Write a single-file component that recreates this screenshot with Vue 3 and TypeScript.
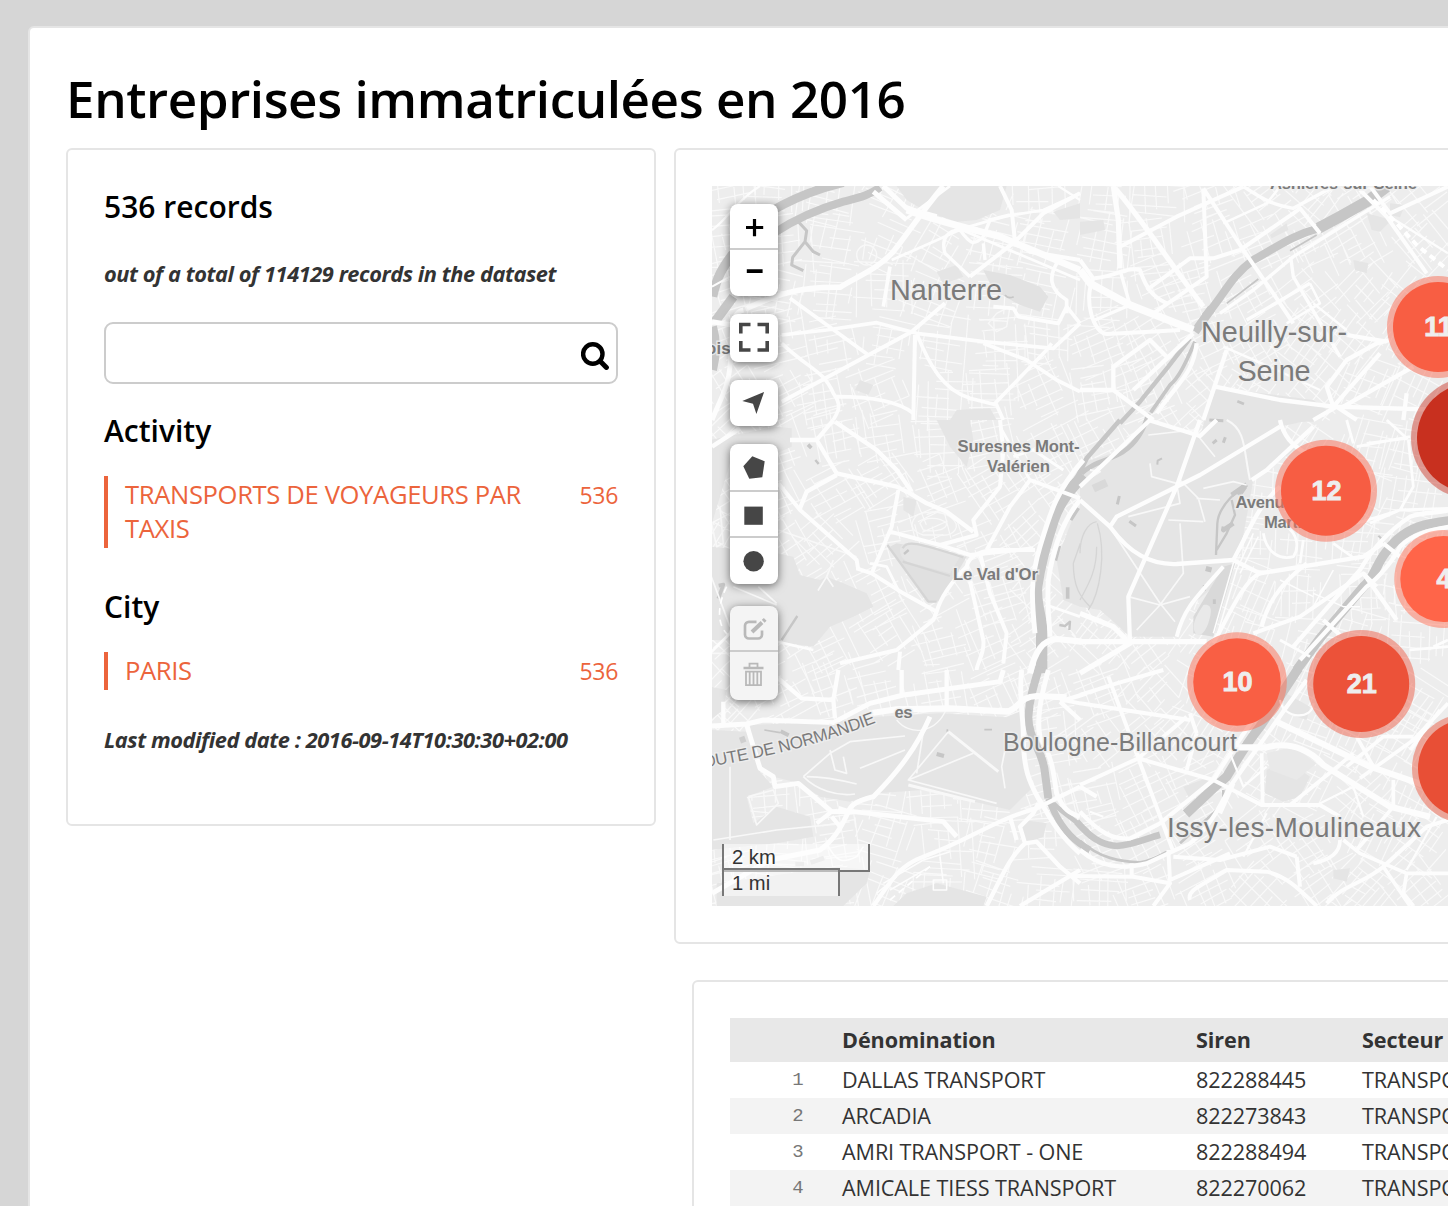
<script setup lang="ts">
interface Shape { t: string; d: string; w?: number; c?: string }
interface Label { x: number; y: number; w: number; s: number; text: string; bold?: boolean }

const records = [
  { n: 1, name: 'DALLAS TRANSPORT', siren: '822288445' },
  { n: 2, name: 'ARCADIA', siren: '822273843' },
  { n: 3, name: 'AMRI TRANSPORT - ONE', siren: '822288494' },
  { n: 4, name: 'AMICALE TIESS TRANSPORT', siren: '822270062' },
]

const facets = [
  { title: 'Activity', value: 'TRANSPORTS DE VOYAGEURS PAR TAXIS', count: 536 },
  { title: 'City', value: 'PARIS', count: 536 },
]

// The map plane is drawn in tiles; each tile has its own origin, in thirds of a pixel.
const tiles: Record<string, string> = {
  A: 'translate(0 0)', B: 'translate(1110 0)',
  C: 'translate(0 720)', D: 'translate(1110 720)',
  E: 'translate(0 1470)', F: 'translate(1110 1470)',
}

// Side streets: small grids of jittered lines whose direction drifts over the plane.
function sideStreets(): string {
  let seed = 20160914
  const rnd = () => {
    seed = (seed * 1664525 + 1013904223) % 4294967296
    return seed / 4294967296
  }
  const out: string[] = []
  for (let cy = 40; cy < 2240; cy += 150) {
    for (let cx = 40; cx < 2280; cx += 160) {
      const x0 = cx + (rnd() - 0.5) * 50
      const y0 = cy + (rnd() - 0.5) * 50
      const a = -0.55 + Math.sin(cx / 420) * 0.5 + Math.cos(cy / 380) * 0.4 + (rnd() - 0.5) * 0.5
      for (let k = 0; k < 2; k++) {
        const t = a + k * (Math.PI / 2) + (rnd() - 0.5) * 0.15
        const ux = Math.cos(t), uy = Math.sin(t)
        const gap = k ? 36 : 26
        for (let o = -85; o < 85; o += gap * (0.7 + rnd() * 0.7)) {
          const s = -95 + rnd() * 80, e = 95 - rnd() * 80
          const b = (rnd() - 0.5) * 12
          const px = x0 - uy * o, py = y0 + ux * o
          out.push(`M${(px + ux * s).toFixed(0)} ${(py + uy * s).toFixed(0)}L${(px + ux * e - uy * b).toFixed(0)} ${(py + uy * e + ux * b).toFixed(0)}`)
        }
      }
    }
  }
  return out.join('')
}
const streets = sideStreets()

const parks: Shape[] = [
  { t: 'A', d: 'M560 18H890L870 90 800 120 740 125 650 95 590 60Z' },
  { t: 'A', d: 'M820 270L900 285 990 320 1015 350 990 395 930 375 850 330Z', c: '#e2e2e2' },
  { t: 'A', d: 'M680 275L740 255 760 290 700 312Z' },
  { t: 'A', d: 'M450 600L490 615 475 645 435 630Z' },
  { t: 'A', d: 'M1030 95L1110 70 1110 115 1050 120Z' },
  { t: 'A', d: 'M740 690L840 685 860 720H720Z' },
  { t: 'B', d: 'M0 125L70 120 75 150 0 165Z' },
  { t: 'B', d: 'M860 100L935 120 900 155 875 150Z' },
  { t: 'B', d: 'M930 70L975 75 960 112 930 105Z' },
  { t: 'B', d: 'M820 240L865 250 860 280 825 270Z' },
  { t: 'B', d: 'M570 165L620 130 625 150 575 175Z' },
  { t: 'B', d: 'M410 622L700 660 740 690 700 725H370Z' },
  { t: 'D', d: 'M205 0L360 48 375 0H690L600 20 650 85 520 180 480 400 400 500 330 560 290 650 150 650 95 600 60 570 0 560V130L130 90Z' },
  { t: 'D', d: 'M430 440L465 430 400 650 340 640 340 590Z', c: '#d9d9d9' },
  { t: 'D', d: 'M370 555C400 550 395 580 385 610C370 650 350 655 342 630C338 600 355 580 370 555Z', c: '#e9e9e9' },
  { t: 'C', d: 'M0 60L200 20 245 25 245 80 200 100 60 130 0 330Z' },
  { t: 'C', d: 'M680 0H780L790 60 770 140 720 80Z' },
  { t: 'C', d: 'M200 400L250 410 270 465 330 480 350 470 400 490 470 520 490 560 430 590 360 620 310 680 200 665 0 660V380Z' },
  { t: 'C', d: 'M580 230L620 240 610 290 580 270Z' },
  { t: 'C', d: 'M560 370L770 410 690 545 650 545 540 380Z', c: '#e0e0e0' },
  { t: 'C', d: 'M575 375C600 360 640 370 750 410L720 460 590 425C570 410 565 390 575 375Z' },
  { t: 'C', d: 'M1090 290L1110 260V560L1060 540 1040 420Z' },
  { t: 'E', d: 'M120 165L360 155 500 140 690 130 890 142 940 120 945 280 970 350 900 420 640 360 500 370 420 395 330 380 270 340 190 320 140 300Z' },
  { t: 'E', d: 'M0 180L110 185 150 305 190 350 110 380 130 460 200 410 300 440 310 500 200 520 0 540Z' },
  { t: 'E', d: 'M380 590L480 600 470 640 400 708H20V640Z' },
  { t: 'E', d: 'M590 670L680 640 830 680 820 708H550Z' },
  { t: 'E', d: 'M940 450L1010 460 1000 500 950 520 930 480Z' },
  { t: 'E', d: 'M0 50L50 60 40 120 0 150Z' },
  { t: 'F', d: 'M560 300L620 270 690 320 660 380 610 395 555 370Z' },
  { t: 'F', d: 'M560 250L640 230 710 280 650 330 570 300Z', c: '#e9e9e9' },
  { t: 'F', d: 'M760 600L810 595 800 635 760 625Z' },
  { t: 'F', d: 'M310 350L390 320 400 340 330 390Z' },
  { t: 'F', d: 'M600 60L690 110 680 150 620 130Z' },
]

const water: Shape[] = [
  { t: 'A', w: 26, d: 'M190 90C250 55 290 40 340 24L400 8' },
  { t: 'A', w: 24, d: 'M190 160C260 115 330 85 400 65C450 52 480 45 510 22' },
  { t: 'A', w: 28, d: 'M200 150L66 225C40 260 20 290 8 350M70 350L15 425' },
  { t: 'A', w: 26, d: 'M8 440C20 480 20 520 8 570' },
  { t: 'A', w: 9, d: 'M265 125L290 152 285 185 310 215 330 225M285 185L248 232 245 255 280 272' },
  { t: 'A', w: 5, d: 'M885 345Q895 358 911 350' },
  { t: 'B', w: 34, d: 'M920 20L860 65 780 110 715 145' },
  { t: 'B', w: 24, d: 'M715 145C640 165 600 195 520 240C450 290 430 350 375 410' },
  { t: 'B', w: 26, d: 'M395 385L345 455' },
  { t: 'B', w: 13, d: 'M330 475L265 560 180 665 120 730' },
  { t: 'B', w: 11, d: 'M345 485C320 540 300 590 270 615L212 698' },
  { t: 'B', w: 5, d: 'M710 165L630 212M535 297L440 370' },
  { t: 'D', w: 14, d: 'M120 0L20 115 -10 175M205 -20C190 40 160 75 130 95C80 125 40 125 5 160' },
  { t: 'C', w: 34, d: 'M1120 165C1080 210 1050 240 1030 300C1010 360 990 430 980 500C975 560 1000 600 995 650V760' },
  { t: 'E', w: 24, d: 'M988 -10C970 50 958 90 955 140C955 210 1000 240 1005 310L1015 385' },
  { t: 'E', w: 20, d: 'M1015 385L1035 430C1060 480 1090 515 1140 540' },
  { t: 'E', w: 14, d: 'M1030 400C1070 440 1100 450 1130 485' },
  { t: 'F', w: 20, d: 'M-10 455C30 500 60 525 110 528C160 525 200 505 240 494' },
  { t: 'F', w: 8, d: 'M0 512C60 565 120 575 180 577C220 570 240 555 262 545M300 520L400 430 430 400V360' },
  { t: 'F', w: 28, d: 'M318 432L400 355 440 320C470 270 500 220 540 170L655 -5' },
  { t: 'D', w: 28, d: 'M650 750L720 655 850 500C890 470 885 420 950 360C990 325 1030 310 1110 302' },
  { t: 'D', w: 14, d: 'M500 193L455 225M460 310L430 330 432 320' },
  { t: 'D', w: 7, d: 'M490 200C450 230 415 270 412 310L408 405M455 240L465 285 440 340 410 390' },
  { t: 'D', w: 18, d: 'M494 198L475 225M388 440L384 455' },
  { t: 'D', w: 9, d: 'M398 70L410 60M436 52L430 68M118 228L112 253M148 304L168 318M373 495V512M403 538V552M388 0L430 2' },
  { t: 'D', w: 6, d: 'M246 115L233 122 232 134' },
  { t: 'D', w: 6, d: 'M895 347L909 360' },
  { t: 'B', w: 8, d: 'M472 664L492 672' },
  { t: 'C', w: 11, d: 'M1105 264L1082 300M1073 502V536M26 497L40 494 25 536M294 74L304 84' },
  { t: 'C', w: 7, d: 'M1050 378L1038 422M316 120L326 132M1048 615L1065 618 1080 605 1078 630M262 588L215 660M582 402L596 390' },
  { t: 'C', w: 7, c: '#d5d5d5', d: 'M532 375L655 545 680 545M578 385C590 360 620 368 760 412M578 425L720 468' },
  { t: 'E', w: 12, d: 'M212 184L236 196M680 252L702 258' },
  { t: 'E', w: 18, c: '#cfcfcf', d: 'M90 212L106 206' },
  { t: 'E', w: 5, d: 'M163 180L210 188M712 178V188M823 179H846' },
  { t: 'E', w: 14, c: '#dadada', d: 'M256 582H282M302 578L342 564' },
  { t: 'D', w: 24, c: '#d9d9d9', d: 'M40 206L80 188' },
  { t: 'D', w: 4, c: '#d5d5d5', d: 'M50 305C20 310 0 350 0 400M52 310C80 400 60 520 25 570M50 380C50 460 20 500 0 540M1 370L-20 430C-20 500 0 530 30 560' },
]

const paths: Shape[] = [
  { t: 'D', w: 5, d: 'M145 290L300 250 290 190 215 170 210 130M205 45L340 30 405 110M300 180L355 235 375 305M265 300L370 305M370 205L460 185 500 195M95 330L240 550 285 605M145 530L240 555 330 530M240 555L170 630M240 555L310 460 300 310M350 235L420 240' },
  { t: 'D', w: 6, d: 'M440 0C500 30 490 90 510 180M30 150L60 155 20 180' },
  { t: 'E', w: 5, d: 'M60 290V510M10 510L200 480 400 460M280 320L360 250 420 215 585 198M450 295L585 240M280 320C320 360 380 380 435 372M290 320Q350 320 440 342M715 185L595 330 860 400M595 330L790 250M640 185L620 310M885 240L875 290 885 355M115 380L190 360 205 400 140 465 115 380M360 240L375 300 410 310 400 260' },
  { t: 'E', w: 9, d: 'M715 185L865 305M595 345L795 395' },
  { t: 'E', w: 4, d: 'M560 150C600 200 680 190 710 115' },
  { t: 'C', w: 5, d: 'M0 290L20 380 40 370 30 260M70 500L200 555M145 500L200 550M0 700H200M370 420L350 470 325 510 350 470 370 500M205 330L440 410M0 460L60 620' },
  { t: 'C', w: 4, d: 'M610 300C620 270 690 270 720 290C760 320 730 350 690 345L640 345C610 335 600 320 610 300ZM630 310C640 290 690 290 710 310C710 335 660 335 640 330Z' },
  { t: 'A', w: 4, d: 'M440 225A30 30 0 1 0 500 225A30 30 0 1 0 440 225M860 400L900 380 890 440 860 455 835 430 860 400' },
]

const roads: Shape[] = [
  // north-west
  { t: 'A', w: 18, d: 'M110 385C200 345 260 320 390 322C440 290 500 270 550 215C600 150 640 90 700 18' },
  { t: 'A', w: 16, d: 'M6 425L100 440M100 390C60 400 70 440 60 560C55 620 30 660 6 720M490 35L590 120M520 18L590 85 680 110' },
  { t: 'A', w: 22, d: 'M590 90C700 130 800 150 870 170L1110 270' },
  { t: 'A', w: 9, d: 'M580 75L1110 300M590 115L720 18' },
  { t: 'A', w: 9, d: 'M545 240L660 190 760 145 880 110 1000 90 1110 40' },
  { t: 'A', w: 12, d: 'M540 260L520 380M240 355L475 525M215 465L350 450 500 428 620 460 820 485 1030 505 1110 430M620 460C660 560 700 630 780 655L860 675 880 720' },
  { t: 'A', w: 13, d: 'M705 370L605 455 215 665M615 465L610 720M870 18L905 90 915 185 960 215 1110 240M915 185L780 290M1110 40L1000 100 915 185' },
  { t: 'A', w: 11, d: 'M780 290L705 220C690 170 720 150 750 150C780 190 790 200 820 170L840 120 900 105M820 190L825 240' },
  { t: 'A', w: 12, d: 'M215 490C300 570 340 570 370 640C400 680 380 700 370 720M380 650C460 650 560 660 610 700M850 675L1010 510 1025 490M850 380L910 385 925 410 1045 430 1070 380 1110 430' },
  { t: 'A', w: 12, d: 'M1050 235C1010 290 1020 330 1070 360V400M820 490L950 540 1040 600 1110 635' },
  { t: 'A', w: 7, d: 'M6 150C50 120 80 60 150 18M6 320L60 290M1045 18L1110 60' },
  // north-east
  { t: 'B', w: 17, d: 'M100 18L115 120 120 265M105 25C180 110 270 250 370 380' },
  { t: 'B', w: 24, d: 'M0 270L30 310 150 375 340 450' },
  { t: 'B', w: 13, d: 'M0 240L40 295C10 360 40 460 80 462L210 455 300 450M45 295C120 285 140 260 180 270C200 330 220 350 260 370M120 200L290 110 490 20M370 25L380 290 220 400M370 25L490 210 600 370 640 430' },
  { t: 'B', w: 13, d: 'M200 330L330 235 400 235 480 210 640 100 660 85 720 160M840 30L920 110 1040 280M870 18L930 100 1104 20' },
  { t: 'B', w: 11, d: 'M490 20C540 50 560 70 640 85L760 20M632 230L640 290 780 530M640 230L520 330 420 400M640 230L800 130 930 50M500 420L690 310M45 420L150 375 120 270' },
  { t: 'B', w: 14, d: 'M160 630L340 460M0 630H100L220 720M100 630V560L210 480 260 530M350 490C340 580 300 600 230 700' },
  { t: 'B', w: 14, d: 'M440 510L370 720M405 620L600 660 760 680M760 680L740 620 800 540 890 490 930 480M760 680L900 520M800 465L920 485M760 680L1104 690M790 680L1000 560M700 720L770 680 830 720M980 640L970 720' },
  { t: 'B', w: 8, d: 'M430 500L590 570 720 630M700 370L800 450M600 20L560 70 430 130M930 110L1104 220M690 310L720 370 620 430' },
  // west
  { t: 'C', w: 14, d: 'M6 80L90 25M240 60H320L370 0M320 60L380 160 560 200 600 220 650 250 710 275 790 335M375 5L500 90 560 150 605 215M380 165L290 215 270 265' },
  { t: 'C', w: 13, d: 'M205 190L270 270 440 420 445 450M565 210L545 320 485 460M540 335L690 375 780 405 970 385' },
  { t: 'C', w: 13, d: 'M440 445L485 460 580 520 680 575 670 600 560 690 390 730M570 695L565 750M680 575C690 540 710 500 770 440C775 415 800 395 850 390H975' },
  { t: 'C', w: 13, d: 'M690 375L800 345 790 300 870 200 880 90 870 0M810 400L840 520 890 640 880 730M770 440L820 660C825 700 800 730 800 750M830 390L900 260 960 180 1110 235' },
  { t: 'C', w: 16, d: 'M1110 240C1060 300 1030 380 1015 480C1010 560 1020 620 1020 650M1120 120C1040 210 1020 280 990 380C960 480 965 540 975 640' },
  { t: 'C', w: 20, d: 'M960 760C975 690 1000 660 1040 657L1115 665' },
  { t: 'C', w: 9, d: 'M960 180L870 20M1010 555L1110 590M200 665L310 690M480 430L530 440 565 510M0 700L60 640 90 560M1060 150L970 90 910 110' },
  // east
  { t: 'D', w: 17, d: 'M-5 665H380M0 580L100 620 150 670 0 760' },
  { t: 'D', w: 14, d: 'M360 0L290 200 145 530 150 670M0 240L90 320C150 400 210 435 290 432L460 420M90 320L110 290 360 165 600 20M0 200L210 0' },
  { t: 'D', w: 14, d: 'M205 0L360 48 410 0M600 0C610 50 640 80 680 100M700 20L560 150 515 180M460 420C510 330 530 260 600 200M460 420L540 460 850 410 910 370' },
  { t: 'D', w: 13, d: 'M290 650C310 570 340 540 430 440M540 460C490 480 440 600 400 670M545 620C560 560 590 500 680 430M520 640L660 590 850 460 890 500' },
  { t: 'D', w: 14, d: 'M660 720L860 500C900 470 940 420 960 380C1000 340 1050 330 1110 320M640 680L840 450C880 380 930 330 990 290C1030 275 1080 280 1110 270M910 370L960 410M850 460L950 600M730 600L780 645' },
  { t: 'D', w: 9, d: 'M550 340C560 400 600 420 640 410C660 380 650 340 620 320M830 80L990 50M860 70L980 55 920 0M985 60L1000 200 960 270 830 310M800 0L820 70M760 370L830 420M670 360L660 430M870 310L960 270 1104 265M1060 680L1104 660M990 690L1104 680M600 660L690 710' },
  { t: 'D', w: 5, d: 'M500 330L460 430 400 640M520 340L470 450 410 650M535 350L480 460M700 520L790 560 840 560M600 480L700 530M760 450L700 560' },
  // south-west
  { t: 'E', w: 16, d: 'M6 168L110 162 160 150 370 158 480 100 580 75 870 35 880 0M110 165L150 295 190 320 195 350 265 340 365 425 430 425 700 455 740 500' },
  { t: 'E', w: 20, d: 'M480 130L560 118 720 115 895 125C930 110 930 80 980 78L1070 82' },
  { t: 'E', w: 16, d: 'M660 140C620 230 570 300 490 380C430 395 420 410 415 425C390 480 370 510 330 540L180 570 6 670M415 425L385 415' },
  { t: 'E', w: 14, d: 'M490 708C540 640 560 590 640 560C780 510 850 450 980 415L1110 350M710 0V115M575 0V75M205 25L275 85 370 90 375 145M370 90L385 0M40 95V160' },
  { t: 'E', w: 16, d: 'M935 0C925 90 940 130 940 200C940 300 960 340 985 385C1010 420 1030 480 1110 550M1015 0C990 90 980 150 990 200C1030 270 1030 310 1040 370C1060 420 1080 430 1110 440' },
  { t: 'E', w: 14, d: 'M985 400L970 430 930 470 945 520C900 560 880 610 830 708M945 520L980 515 1050 590 1110 640M900 440L920 510M1050 95L1110 150M1050 95L1130 70M365 425L320 460M365 440L390 470M930 708L1110 600' },
  { t: 'E', w: 5, d: 'M520 640L640 570 720 545M540 660L660 590M500 670L560 620M350 520C380 580 400 580 440 560L460 530M690 560L700 640M670 630H710V660H670Z' },
  // south-east
  { t: 'F', w: 13, d: 'M0 75L110 40 250 0M-50 90L0 100 330 150M85 20L175 265 0 345M175 265L400 330 545 405H720L780 440M330 130L350 190M175 265L280 545M175 265L320 140M320 300L350 190' },
  { t: 'F', w: 20, d: 'M470 232H560C640 210 700 250 730 285L930 410 1050 440M590 155L870 290 1104 370' },
  { t: 'F', w: 14, d: 'M0 350L50 380M0 425C60 490 100 510 150 505L240 460 400 330C450 250 500 180 570 70M0 540C60 590 120 600 200 580L330 520C380 480 410 430 450 350L620 110 680 30M460 340L420 430' },
  { t: 'F', w: 13, d: 'M-30 618L160 620 270 640 220 708M155 580V620M265 540L270 630 450 550M280 560L420 570 570 530 650 560M330 690C320 660 360 650 440 600L560 605C620 620 650 650 710 708M650 560L660 650M740 700C780 650 850 640 910 590L1040 470 1104 450' },
  { t: 'F', w: 12, d: 'M545 250L548 405M630 405L760 300 820 250M790 510L840 550 910 580 980 610H1104M780 510C780 550 750 570 700 580M980 610L970 670 1000 708M910 590L990 708M940 330V410L830 540M840 325L1000 210 1104 100M830 200L880 290M800 290L910 200H1000M990 240L1080 120' },
  { t: 'F', w: 7, d: 'M600 90C610 150 700 150 700 100M820 350L850 440M820 350L700 410M450 250L490 350 560 290M560 430L490 560M30 425L70 440M1070 440L980 600' },
]

const dashed: Shape[] = [
  { t: 'B', w: 12, d: 'M880 60L950 130 1010 195 1104 270' },
  { t: 'C', w: 5, d: 'M50 500C20 560 20 620 60 650' },
  { t: 'E', w: 5, d: 'M540 690L660 590' },
]

const labels: Label[] = [
  { x: 890, y: 300, w: 112, s: 28.8, text: 'Nanterre' },
  { x: 1201, y: 342, w: 146, s: 28.8, text: 'Neuilly-sur-' },
  { x: 1237.5, y: 381, w: 73, s: 28.8, text: 'Seine' },
  { x: 957.5, y: 451.5, w: 122, s: 16.8, text: 'Suresnes Mont-', bold: true },
  { x: 987, y: 471.5, w: 63, s: 16.8, text: 'Valérien', bold: true },
  { x: 953, y: 580, w: 85, s: 16.8, text: "Le Val d'Or", bold: true },
  { x: 1235.5, y: 508, w: 104, s: 16.8, text: 'Avenue Henri', bold: true },
  { x: 1264, y: 528, w: 48, s: 16.8, text: 'Martin', bold: true },
  { x: 894.5, y: 717.5, w: 18, s: 16.8, text: 'es', bold: true },
  { x: 706, y: 353.5, w: 24.5, s: 16.8, text: 'ois', bold: true },
  { x: 1270, y: 188.7, w: 147, s: 16.8, text: 'Asnières-sur-Seine', bold: true },
  { x: 1003, y: 751, w: 234, s: 25, text: 'Boulogne-Billancourt' },
  { x: 1167, y: 837, w: 254, s: 28, text: 'Issy-les-Moulineaux' },
]

const clusters = [
  { x: 1438, y: 327, r: 51, fill: '#f85e43', n: '11' },
  { x: 1472, y: 438, r: 61, fill: '#c8301f', n: '76' },
  { x: 1326, y: 490.7, r: 51, fill: '#f75d43', n: '12' },
  { x: 1443.3, y: 579, r: 49, fill: '#ff6549', n: '4' },
  { x: 1237, y: 682, r: 49.8, fill: '#f95f44', n: '10' },
  { x: 1361.2, y: 684, r: 54, fill: '#ec5239', n: '21' },
  { x: 1467, y: 768.5, r: 55, fill: '#e84f36', n: '26' },
]
</script>

<template>
  <div class="page">
    <main class="board">
      <h1>Entreprises immatriculées en 2016</h1>
      <div class="columns">
        <aside class="panel filters">
          <h2>536 records</h2>
          <p class="note">out of a total of 114129 records in the dataset</p>
          <div class="search">
            <svg width="28" height="28" viewBox="0 0 28 28" fill="none" stroke="#000">
              <circle cx="11.8" cy="12" r="9.7" stroke-width="4.4" />
              <path d="M19.5 19.5L25.4 25.4" stroke-width="5" stroke-linecap="round" />
            </svg>
          </div>
          <section v-for="f in facets" :key="f.title" class="facet">
            <h3>{{ f.title }}</h3>
            <a class="choice"><span class="value">{{ f.value }}</span><span class="count">{{ f.count }}</span></a>
          </section>
          <p class="note last">Last modified date : 2016-09-14T10:30:30+02:00</p>
        </aside>

        <div class="results">
          <div class="panel map-panel">
            <div class="map">
              <svg class="plane" width="736" height="720" viewBox="712 186 736 720">
                <rect x="712" y="186" width="736" height="720" fill="#ededed" />
                <g transform="translate(710 180) scale(.333333)" fill="none" stroke="#fff" stroke-linejoin="round">
                  <path :d="streets" stroke-width="3.5" stroke="#f9f9f9" />
                  <g stroke="none">
                    <path v-for="(s, i) in parks" :key="i" :transform="tiles[s.t]" :d="s.d" :fill="s.c || '#e5e5e5'" />
                  </g>
                  <path v-for="(s, i) in water" :key="'w' + i" :transform="tiles[s.t]" :d="s.d" :stroke-width="s.w" :stroke="s.c || '#c6c6c6'" />
                  <path v-for="(s, i) in paths" :key="'p' + i" :transform="tiles[s.t]" :d="s.d" :stroke-width="s.w" stroke="#f8f8f8" />
                  <path v-for="(s, i) in roads" :key="'r' + i" :transform="tiles[s.t]" :d="s.d" :stroke-width="(s.w || 0) * 0.92" stroke="#fdfdfd" />
                  <path v-for="(s, i) in dashed" :key="'d' + i" :transform="tiles[s.t]" :d="s.d" :stroke-width="s.w" stroke-dasharray="20 14" />
                </g>
                <path id="route" d="M692 770C740 761 800 753 888 718" fill="none" />
                <g class="labels">
                  <text font-size="17"><textPath href="#route" textLength="191">ROUTE DE NORMANDIE</textPath></text>
                  <text
                    v-for="l in labels" :key="l.text" :x="l.x" :y="l.y" :font-size="l.s"
                    :textLength="l.w" :font-weight="l.bold ? 700 : 400"
                  >{{ l.text }}</text>
                </g>
                <g v-for="c in clusters" :key="c.n" class="cluster">
                  <circle :cx="c.x" :cy="c.y" :r="c.r" :fill="c.fill" fill-opacity=".5" />
                  <circle :cx="c.x" :cy="c.y" :r="c.r" fill="#fff" fill-opacity=".08" />
                  <circle :cx="c.x" :cy="c.y" :r="c.r - 6" :fill="c.fill" />
                  <text :x="c.x + 0.6" :y="c.y + 9">{{ c.n }}</text>
                </g>
              </svg>

              <div class="controls">
                <div class="bar">
                  <span class="btn" style="height: 44px">
                    <svg width="48" height="44"><path d="M24.5 15V32.2M16 23.5H33.2" stroke="#000" stroke-width="3.2" /></svg>
                  </span>
                  <span class="btn" style="height: 46px">
                    <svg width="48" height="46"><path d="M16.8 21.2H32.6" stroke="#000" stroke-width="3.8" /></svg>
                  </span>
                </div>
                <div class="bar">
                  <span class="btn" style="height: 48px">
                    <svg width="48" height="48"><path d="M20.5 10.5H10.8V19.5M27.5 10.5H37.2V19.5M20.5 36H10.8V27M27.5 36H37.2V27" fill="none" stroke="#464646" stroke-width="3.6" /></svg>
                  </span>
                </div>
                <div class="bar">
                  <span class="btn" style="height: 46px">
                    <svg width="48" height="46"><path d="M12.3 20.9L34.1 12L26.4 34L23 23.8Z" fill="#464646" /></svg>
                  </span>
                </div>
                <div class="bar draw">
                  <span class="btn" style="height: 46px">
                    <svg width="48" height="46"><path d="M22.3 12.3L34.7 17.3L32.3 33.3L19.3 34.7L13.3 22.3Z" fill="#464646" /></svg>
                  </span>
                  <span class="btn" style="height: 44px">
                    <svg width="48" height="44"><rect x="14.3" y="14.6" width="18.5" height="18.2" fill="#464646" /></svg>
                  </span>
                  <span class="btn" style="height: 46px">
                    <svg width="48" height="46"><circle cx="23.6" cy="23.3" r="10.2" fill="#464646" /></svg>
                  </span>
                </div>
                <div class="bar off">
                  <span class="btn" style="height: 44px">
                    <svg width="48" height="44" fill="none" stroke="#b9b9b9">
                      <path d="M26.5 15.8H19A4 4 0 0 0 15 19.8V28.5A4 4 0 0 0 19 32.5H28A4 4 0 0 0 32 28.5V24.5" stroke-width="2.7" />
                      <path d="M22 26L32 16.5" stroke-width="4" /><path d="M33.2 15.3L35.2 13.4" stroke-width="4" />
                    </svg>
                  </span>
                  <span class="btn" style="height: 48px">
                    <svg width="48" height="48" fill="none" stroke="#b9b9b9">
                      <path d="M13.5 16H33.5" stroke-width="2.6" /><path d="M19.5 15V11.6H27.5V15" stroke-width="1.8" />
                      <path d="M16 19.6H31V33.2H16Z" stroke-width="1.8" /><path d="M19.7 20V33M23.5 20V33M27.3 20V33" stroke-width="1.8" />
                    </svg>
                  </span>
                </div>
              </div>

              <div class="scale">
                <div class="km">2 km</div>
                <div class="mi">1 mi</div>
              </div>
            </div>
          </div>

          <div class="panel table-panel">
            <table>
              <thead>
                <tr><th></th><th>Dénomination</th><th>Siren</th><th>Secteur</th></tr>
              </thead>
              <tbody>
                <tr v-for="r in records" :key="r.n">
                  <td class="num">{{ r.n }}</td><td>{{ r.name }}</td><td>{{ r.siren }}</td><td>TRANSPORTS DE VOYAGEURS PAR TAXIS</td>
                </tr>
              </tbody>
            </table>
          </div>
        </div>
      </div>
    </main>
  </div>
</template>

<style>
body { margin: 0; background: #d6d6d6; }
</style>

<style scoped>
* { box-sizing: border-box; }
.page {
  width: 1448px;
  height: 1206px;
  overflow: hidden;
  padding: 26px 0 0 28px;
  background: #d6d6d6;
  font-family: "Open Sans", "Noto Sans", sans-serif;
  color: #333;
}
.board {
  width: 1900px;
  height: 1400px;
  padding: 36px 36px 0;
  background: #fff;
  border: 2px solid #e5e5e5;
  border-radius: 6px;
}
h1, h2, h3, p { margin: 0; }
h1 {
  height: 84px;
  line-height: 69px;
  font-size: 51.2px;
  letter-spacing: -.44px;
  font-weight: 600;
  color: #000;
  white-space: nowrap;
}
.columns { display: flex; align-items: flex-start; gap: 18px; }
.panel { background: #fff; border: 2px solid #e5e5e5; border-radius: 6px; }
.filters { width: 590px; height: 678px; padding: 36px; flex: none; }
h2, h3 { font-size: 30px; line-height: 42px; font-weight: 600; color: #000; white-space: nowrap; }
.note {
  margin-top: 30px;
  font-size: 21.8px;
  letter-spacing: -.44px;
  line-height: 32px;
  font-weight: 700;
  font-style: italic;
  white-space: nowrap;
}
.search {
  display: flex;
  justify-content: flex-end;
  align-items: center;
  height: 62px;
  margin: 32px 0 26px;
  padding: 6px 7px 0 0;
  border: 2px solid #ccc;
  border-radius: 9px;
}
.facet { margin-bottom: 38px; }
.facet:last-of-type { margin-bottom: 0; }
.choice {
  display: flex;
  justify-content: space-between;
  margin-top: 24px;
  padding: 2px 0 2px 17px;
  border-left: 4px solid #ec643c;
  color: #ec643c;
}
.value { width: 410px; font-size: 25.6px; letter-spacing: -.36px; line-height: 34px; }
.count { font-size: 23px; letter-spacing: -.3px; line-height: 34px; }
.note.last { margin-top: 34px; }
.results { flex: none; width: 1200px; }
.map-panel { height: 796px; padding: 36px; }
.map { position: relative; width: 1120px; height: 720px; overflow: hidden; background: #ededed; }
.plane { display: block; font-family: "Liberation Sans", Arial, sans-serif; }
.labels text {
  fill: #7b7b7b;
  stroke: #efefef;
  stroke-width: 3px;
  stroke-opacity: .75;
  paint-order: stroke;
}
.cluster text {
  font-size: 27px;
  font-weight: 700;
  fill: #eee;
  stroke: #eee;
  stroke-width: .9px;
  text-anchor: middle;
}
.controls {
  position: absolute;
  left: 18px;
  top: 18px;
  display: flex;
  flex-direction: column;
  gap: 18px;
}
.bar {
  width: 48px;
  overflow: hidden;
  background: #fff;
  border-radius: 8px;
  box-shadow: 0 2px 10px rgba(0, 0, 0, .55);
}
.btn { display: block; }
.btn svg { display: block; }
.btn + .btn { box-sizing: content-box; border-top: 2px solid #ccc; }
.bar.draw { margin-bottom: 4px; }
.bar.off { background: #f4f4f4; }
.scale {
  position: absolute;
  left: 10px;
  bottom: 10px;
  display: flex;
  flex-direction: column;
  font: 20.2px/22px "Liberation Sans", Arial, sans-serif;
  color: #333;
}
.km, .mi {
  padding: 2px 8px;
  border: 2px solid #777;
  border-top: 0;
  background: rgba(255, 255, 255, .5);
}
.km { width: 148px; height: 28px; }
.mi { width: 118px; height: 28px; margin-top: -4px; border-top: 2px solid #777; border-bottom: 0; }
.table-panel { margin: 36px 0 0 18px; padding: 36px; }
table { width: 1400px; table-layout: fixed; border-collapse: collapse; font-size: 21.6px; letter-spacing: -.1px; }
th, td { padding: 0; text-align: left; white-space: nowrap; }
th { height: 44px; padding-bottom: 2px; background: #e8e8e8; font-weight: 700; }
td { height: 36px; line-height: 36px; }
th:nth-child(1) { width: 112px; }
th:nth-child(2) { width: 354px; }
th:nth-child(3) { width: 166px; }
tbody tr:nth-child(even) { background: #f3f3f3; }
.num {
  padding-right: 38.5px;
  text-align: right;
  font: 19px/34px "Liberation Mono", "Courier New", monospace;
  color: #777;
}
</style>
